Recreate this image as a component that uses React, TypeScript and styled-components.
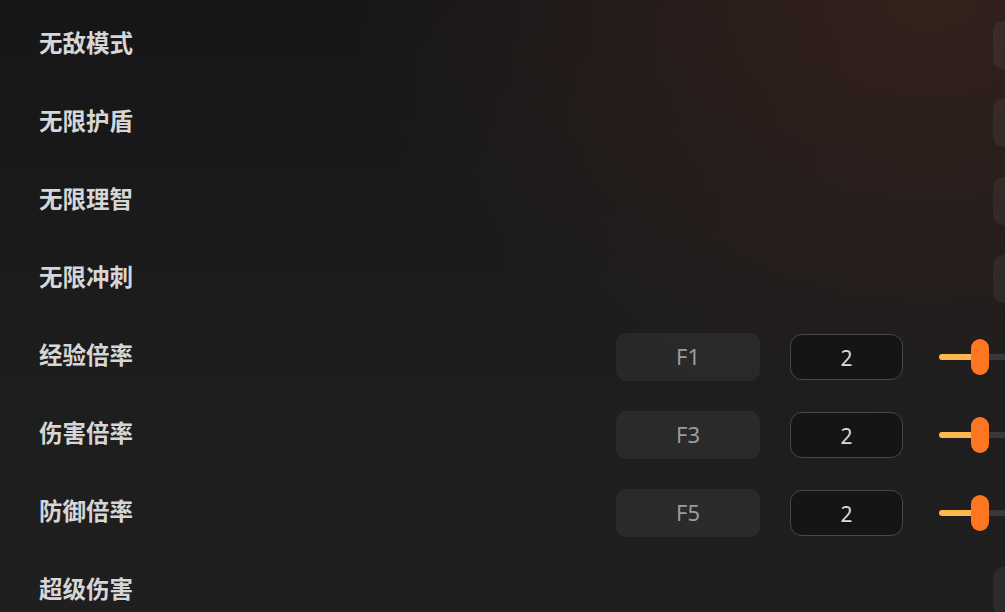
import React from 'react'
import styled, { createGlobalStyle } from 'styled-components'

const GlobalStyle = createGlobalStyle`
    html, body {
        margin: 0;
        padding: 0;
        width: 100%;
        height: 100%;
        overflow: hidden;
        background: #1e1e1e;
    }
    * {
        box-sizing: border-box;
    }
`

const Page = styled.div`
    width: 100vw;
    height: 100vh;
    overflow: hidden;
    font-family: "Noto Sans", "Noto Sans CJK SC", sans-serif;
    background:
        radial-gradient(ellipse 580px 440px at 930px -20px, rgba(78, 42, 30, 0.55), rgba(78, 42, 30, 0) 100%),
        linear-gradient(180deg, #161618 0%, #1b1b1c 45%, #1e1e1e 70%, #1f1f1f 100%);
`

const List = styled.div`
    width: 1137px;
    padding: 21px 0 0 39px;
    display: flex;
    flex-direction: column;
    gap: 30px;
`

const Row = styled.div`
    height: 48px;
    display: flex;
    align-items: center;
    justify-content: space-between;
`

const Label = styled.div`
    font-family: "Noto Sans CJK SC", "Noto Sans", sans-serif;
    font-size: 23.5px;
    font-weight: 700;
    color: #d6d6d6;
    margin-top: -6px;
`

const Controls = styled.div`
    display: flex;
    align-items: center;
    gap: 30px;
`

const KeyBox = styled.div`
    width: 144px;
    height: 48px;
    border-radius: 10px;
    background: rgba(255, 255, 255, 0.055);
    display: flex;
    align-items: center;
    justify-content: center;
    color: #9c9c9c;
    font-size: 22px;
    padding-bottom: 3px;
`

const ValueBox = styled.div`
    width: 113px;
    height: 46px;
    border-radius: 12px;
    border: 1.5px solid #474747;
    background: #151515;
    display: flex;
    align-items: center;
    justify-content: center;
    color: #dadada;
    font-size: 21px;
    padding-top: 2px;
`

const SliderWrap = styled.div`
    width: 198px;
    height: 36px;
    margin-left: 6px;
    position: relative;
    display: flex;
    align-items: center;
`

const Track = styled.div`
    width: 100%;
    height: 6px;
    border-radius: 3px;
    background: #383838;
    position: relative;
`

const Fill = styled.div`
    position: absolute;
    left: 0;
    top: 0;
    bottom: 0;
    border-radius: 3px;
    background: #ffb64d;
`

const Thumb = styled.div`
    position: absolute;
    top: 0;
    width: 18px;
    height: 36px;
    border-radius: 9px;
    background: #ff7622;
    transform: translateX(-50%);
`

interface Item {
    name: string
    hotkey?: string
    value?: number
}

const items: Item[] = [
    { name: '无敌模式' },
    { name: '无限护盾' },
    { name: '无限理智' },
    { name: '无限冲刺' },
    { name: '经验倍率', hotkey: 'F1', value: 2 },
    { name: '伤害倍率', hotkey: 'F3', value: 2 },
    { name: '防御倍率', hotkey: 'F5', value: 2 },
    { name: '超级伤害' },
]

function Slider({ value, min = 0, max = 10 }: { value: number, min?: number, max?: number }) {
    const pct = ((value - min) / (max - min)) * 100 + 0.7
    return (
        <SliderWrap>
            <Track>
                <Fill style={{ width: `${pct}%` }} />
            </Track>
            <Thumb style={{ left: `${pct}%` }} />
        </SliderWrap>
    )
}

export default function App() {
    return (
        <>
            <GlobalStyle />
            <Page>
                <List>
                    {items.map(item => (
                        <Row key={item.name}>
                            <Label>{item.name}</Label>
                            {item.hotkey ? (
                                <Controls>
                                    <KeyBox>{item.hotkey}</KeyBox>
                                    <ValueBox>{item.value}</ValueBox>
                                    <Slider value={item.value ?? 0} />
                                </Controls>
                            ) : (
                                <Controls>
                                    <KeyBox />
                                </Controls>
                            )}
                        </Row>
                    ))}
                </List>
            </Page>
        </>
    )
}
